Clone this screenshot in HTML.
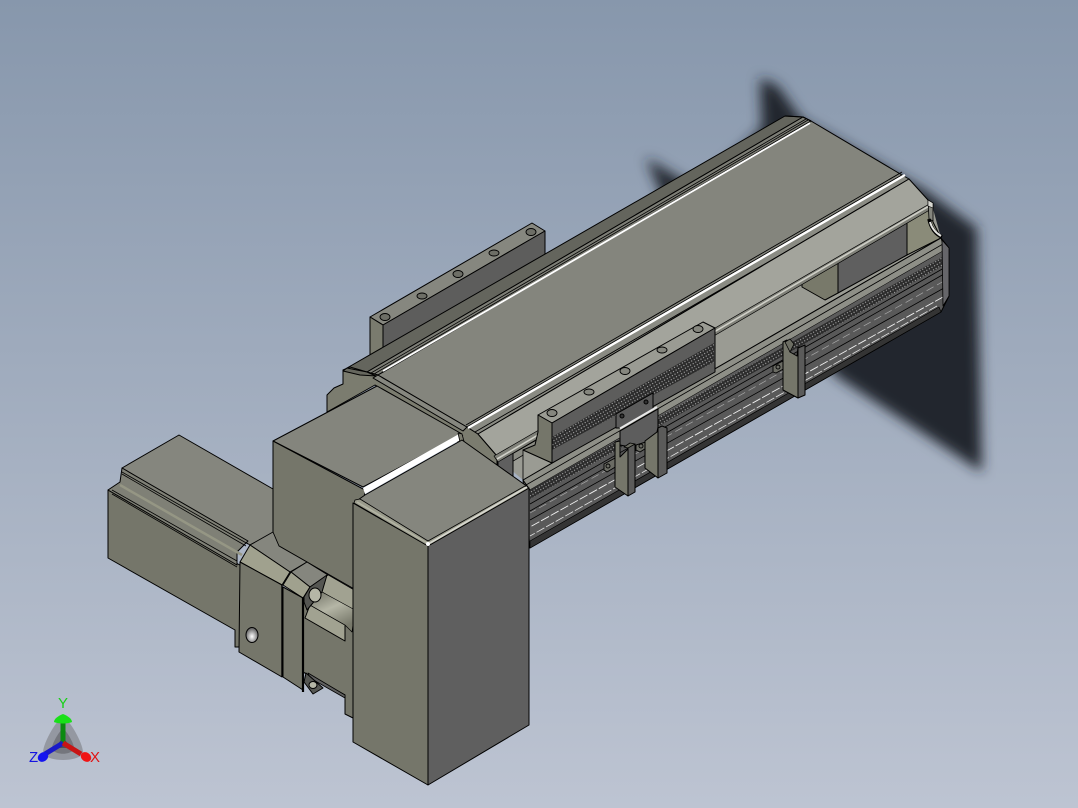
<!DOCTYPE html>
<html><head><meta charset="utf-8">
<style>
html,body{margin:0;padding:0;width:1078px;height:808px;overflow:hidden;background:linear-gradient(#8797ac,#bdc4d2)}
svg{position:absolute;left:0;top:0}
text{font-family:"Liberation Sans",sans-serif;font-size:15px}
</style></head><body>
<svg width="1078" height="808" viewBox="0 0 1078 808">
<defs>
<filter id="b" x="-20%" y="-20%" width="140%" height="140%"><feGaussianBlur stdDeviation="6.5"/></filter>
<pattern id="perf" width="3" height="3" patternUnits="userSpaceOnUse" patternTransform="rotate(-30)"><rect width="3" height="3" fill="#2c2c2c"/><circle cx="1.5" cy="1.5" r=".6" fill="#b0b0b0"/></pattern>
<radialGradient id="hole" cx=".5" cy=".6" r=".6"><stop offset="0" stop-color="#fff"/><stop offset="1" stop-color="#555"/></radialGradient>
<linearGradient id="cyl" x1="0" y1="0" x2=".5" y2="1"><stop offset="0" stop-color="#6f7064"/><stop offset=".5" stop-color="#b5b6a6"/><stop offset="1" stop-color="#77786a"/></linearGradient>
</defs>

<!-- shadow -->
<polygon filter="url(#b)" fill="#23272d" points="760,78 778,86 802,120 925,190 977,228 982,472 836,376 700,215 668,210 646,158 700,190 762,128"/>

<g stroke="#000" stroke-width="1" stroke-linejoin="round">
<!-- back plate -->
<polygon fill="#86877f" points="370,317 532,223 545,231 383,325"/>
<polygon fill="#5d5d5c" points="383,325 545,231 545,260 383,352"/>
<polygon fill="#7a7b6e" points="370,317 383,325 383,350 370,358"/>
<g fill="#6d6e66" stroke-width=".9">
<ellipse cx="385" cy="317" rx="5" ry="3.5"/><ellipse cx="422" cy="296" rx="5" ry="3"/><ellipse cx="458" cy="274" rx="5" ry="3.5"/><ellipse cx="494" cy="253" rx="5" ry="3"/><ellipse cx="531" cy="232" rx="5" ry="3.5"/>
</g>

<!-- beam upper dark band -->
<polygon fill="#64655d" points="785,116 803,117 367,372 347,368"/>
<polygon fill="#7d7e76" points="803,117 811,121 378,375 367,372"/>
<path d="M806,119 371,373M808,120 374,374" stroke-width=".8" fill="none"/>
<path d="M785,116 803,117 811,121" fill="none"/>
<!-- end piece -->
<polygon fill="#7b7c6f" points="343,370 350,367 367,372 378,375 467,427 478,434 497,456 497,472 463,445 375,385 327,412 327,395 334,388 343,384"/>
<polygon fill="#86877f" points="378,375 467,427 463,431 373,378"/>
<polygon fill="#66675e" points="347,368 367,372 376,376 360,375 343,371"/>
<path d="M375,385 463,436M497,458 497,472" fill="none"/>

<!-- top face -->
<polygon fill="#84857d" points="811,121 902,175 467,427 378,375"/>
<line x1="810" y1="123" x2="383" y2="371" stroke="#fff" stroke-width="1.8"/>
<!-- right rail strip -->
<polygon fill="#8a8b83" points="902,175 909,179 478,434 467,427"/>
<line x1="905" y1="175" x2="468" y2="428" stroke="#fff" stroke-width="2.4"/>
<path d="M902,172 466,425M908,181 475,432" fill="none" stroke-width=".9"/>
<!-- floor / opening -->
<polygon fill="#9a9b93" stroke="none" points="932,205 941,238 523,480 497,458"/>
<polygon fill="#5f5f5f" points="838,260 907,221 907,255 838,293"/>
<polygon fill="#8a8b79" points="907,221 930,207 933,222 941,238 907,255"/>
<polygon fill="#78796a" points="838,260 838,293 825,300 802,287 802,283"/>
<!-- inner ledge + post near -->
<polygon fill="#8a8b83" stroke-width=".8" points="498,462 540,438 540,445 505,466"/>
<polygon fill="#5f5f5f" points="498,457 513,450 513,477 498,486"/>
<!-- light band -->
<polygon fill="#a3a49c" points="909,179 928,200 932,205 497,456 478,434"/>
<polygon fill="#7f8078" stroke-width=".7" points="931,203 933,208 498,462 494,456"/>
<line x1="930" y1="205.5" x2="497" y2="459" stroke="#cfcfc7" stroke-width="1.6"/>
<path d="M928,200 933,203 933,221 929,219Z" fill="#85867e" stroke-width=".8"/>
<path d="M928,200 933,203 933,208 928,206Z" fill="#d8d8d2" stroke-width=".6"/>
<path d="M929,219C931,228 935,234 942,237" fill="none" stroke="#000" stroke-width="3.6"/>
<path d="M930,222C932,229 936,233 941,236" fill="none" stroke="#e4e4e0" stroke-width="2"/>

<!-- side profile -->
<polygon fill="#595959" points="941,238 949,248 949,296 941,312 530,548 523,480"/>
<polygon fill="#8e8f87" points="941,238 945,250 530,490 523,480"/>
<path d="M943,244 526,485" fill="none" stroke-width=".8"/>
<polygon fill="#5c5c5c" stroke="none" points="945,250 945,258 530,492 530,490"/>
<polygon fill="url(#perf)" stroke="none" points="944,256 944,265 530,499 530,490"/>
<path d="M944,268 530,504M944,274 530,511" fill="none" stroke-width=".8"/>
<line x1="944" y1="281" x2="530" y2="513" stroke="#a8a8a8" stroke-width=".7" stroke-dasharray="8 4"/>
<line x1="943" y1="297" x2="530" y2="527" stroke="#f0f0f0" stroke-width=".9" stroke-dasharray="9 2"/>
<line x1="937" y1="306" x2="530" y2="536" stroke="#e4e4e4" stroke-width=".8" stroke-dasharray="9 2"/>
<path d="M944,288 530,520" fill="none" stroke-width=".8"/>
<polygon fill="#343434" stroke-width=".7" points="939,307 941,312 530,548 530,541"/>
<polygon fill="#66666a" stroke-width=".8" points="942,240 949,248 949,296 943,306"/>

<!-- small tabs -->
<g fill="#6b6c64" stroke-width=".9">
<polygon points="604,464 617,457 617,466 607,472 604,470"/>
<polygon points="636,444 648,438 648,447 640,452 636,450"/>
<polygon points="773,366 787,359 787,367 776,373 773,372"/>
<circle cx="608" cy="466" r="2"/><circle cx="641" cy="446" r="2"/><circle cx="778" cy="367" r="2"/>
</g>

<!-- far clip -->
<polygon fill="#75766a" points="783,342 787,340 790,352 797,356 798,347 798,398 783,390"/>
<polygon fill="#5b5b5a" points="798,348 805,345 805,395 798,398"/>
<polygon fill="#6c6d63" stroke-width=".8" points="785,342 790,339 794,344 790,352"/>

<!-- block on band -->
<polygon fill="#9a9b93" points="538,415 703,322 715,328 552,423"/>
<polygon fill="#5d5d5c" points="552,423 715,328 715,372 552,463"/>
<polygon fill="url(#perf)" stroke="none" points="552,437 714,343 714,362 552,450"/>
<polygon fill="#9a9b93" stroke-width=".8" points="523,450 552,463 523,480"/>
<polygon fill="#75766a" points="538,415 552,423 552,463 523,450 535,445 538,432"/>
<g fill="#85867e" stroke-width=".9">
<ellipse cx="552" cy="413" rx="5" ry="3.5"/><ellipse cx="589" cy="392" rx="5" ry="3"/><ellipse cx="625" cy="371" rx="5" ry="3.5"/><ellipse cx="662" cy="350" rx="5" ry="3"/><ellipse cx="698" cy="329" rx="5" ry="3.5"/>
</g>

<!-- plate -->
<polygon fill="#5b5b5b" points="616,414 653,393 653,409 620,428 616,428"/>
<polygon fill="#5d5d5d" points="620,431 658,409 658,431 652,440 630,447 620,445"/>
<line x1="620" y1="428.5" x2="657" y2="407" stroke="#e8e8e8" stroke-width="2"/>
<circle cx="622" cy="416" r="2" fill="#333"/><circle cx="646" cy="402" r="2" fill="#333"/>

<!-- clip B -->
<polygon fill="#75766a" points="645,441 657,432 658,427 658,478 645,468"/>
<polygon fill="#5b5b5a" points="658,428 662,426 667,428 667,473 658,478"/>
<!-- clip A -->
<polygon fill="#75766a" points="615,442 620,441 620,457 627,450 628,447 628,496 615,487"/>
<polygon fill="#5b5b5a" points="628,447 635,444 635,492 628,496"/>
<polygon fill="#6c6d63" stroke-width=".8" points="624,447 630,443 635,444 628,448"/>

<!-- left motor -->
<polygon fill="#85867e" points="122,468 179,435 273,489 273,533 250,545"/>
<polygon fill="#75766a" points="108,490 245,568 245,647 235,647 235,630 108,558"/>
<polygon fill="#7f8076" points="122,468 248,541 237,552 237,565 108,490 120,482"/>
<line x1="120" y1="485" x2="242" y2="555" stroke="#959684" stroke-width="2.5"/>
<path d="M122,472 248,544M122,474 246,546M112,494 237,567M112,490 237,561" fill="none" stroke-width=".8"/>

<!-- shaft area -->
<polygon fill="#75766a" points="303,600 353,630 353,718 345,714 345,695 303,672"/>
<polygon fill="#a1a291" points="305,618 345,641 345,625 310,605"/>
<polygon fill="#a1a291" stroke-width=".8" points="325,573 356,591 356,612 322,592"/>
<polygon fill="url(#cyl)" stroke-width=".7" points="322,592 355,610 352,632 345,625 310,605"/>
<polygon fill="#5f5f5f" stroke-width=".8" points="308,673 345,695 345,698 310,678"/>

<!-- upper box -->
<polygon fill="#84857d" points="273,441 377,386 462,434 363,487"/>
<path d="M273,441 V535 Q274,542 279,546 L307,562 356,590 365,490Z" fill="#75766a"/>
<polygon fill="#fff" stroke="none" points="363,488 459,434 462,439 365,494"/>
<polygon fill="#7b7c6f" stroke-width=".8" points="462,434 465,445 460,442 458,433"/>

<!-- bracket piece 1 -->
<polygon fill="#85867e" stroke-width=".9" points="250,545 273,532 279,546 307,562 290,572"/>
<polygon fill="#a0a18e" points="240,562 250,545 290,572 282,585"/>
<polygon fill="#75766a" points="240,562 282,585 282,677 239,652"/>
<ellipse cx="252" cy="635" rx="6" ry="7.5" fill="url(#hole)"/>
<!-- bracket piece 2 -->
<polygon fill="#85867e" stroke-width=".9" points="291,572 307,562 328,575 310,587"/>
<polygon fill="#a0a18e" points="283,585 291,572 310,587 303,598"/>
<polygon fill="#75766a" stroke-width="1" points="283,587 303,598 303,690 283,677"/>
<path d="M303,598V692" stroke-width="2.2" fill="none"/>
<path d="M282,585V677" stroke-width="1.4" fill="none"/>
<polygon fill="#555652" points="304,597 310,587 327,575 322,592 307,610 304,602"/>
<ellipse cx="315" cy="595" rx="6" ry="7" fill="#b5b6a6"/>
<polygon fill="#555652" points="306,673 304,682 313,694 323,688"/>
<ellipse cx="313" cy="685" rx="4" ry="3.5" fill="#b5b6a6"/>

<!-- front box -->
<polygon fill="#85867e" points="355,502 365,495 462,440 528,487 428,545"/>
<polygon fill="#75766a" points="353,503 428,546 428,785 353,742"/>
<polygon fill="#5f5f5f" points="428,546 529,488 529,725 428,785"/>
<path d="M354,503 355,500 360,499 428,541 525,486 529,488 428,546Z" fill="#9a9b8c" stroke-width=".8"/>
<line x1="430" y1="543" x2="527" y2="487" stroke="#d6d6ce" stroke-width="1.8"/>
<line x1="357" y1="502" x2="427" y2="543" stroke="#b3b4a4" stroke-width="1.5"/>
<circle cx="428" cy="544" r="2" fill="#fff" stroke="none"/>
</g>

<!-- triad -->
<path d="M63,716C55,722 42,745 43,754C50,762 76,762 83,754C84,745 71,722 63,716Z" fill="#8d9199" opacity=".85"/>
<path d="M63,728C58,733 51,745 52,750C58,755 68,755 74,750C75,745 68,733 63,728Z" fill="#6b6e74" opacity=".8"/>
<path d="M63,737 55,748 71,748Z" fill="#3e3f44" opacity=".7"/>
<path d="M63,743V722" stroke="#0c8a10" stroke-width="5"/>
<path d="M63,714C68,716 72,719 72,722C68,724 58,724 54,722C54,719 58,716 63,714Z" fill="#19e019"/>
<path d="M63,743 45,754" stroke="#1a1ac8" stroke-width="5"/>
<ellipse cx="43" cy="757" rx="5.5" ry="4.5" fill="#1414f0" transform="rotate(-35 43 757)"/>
<path d="M63,743 81,754" stroke="#c81414" stroke-width="5"/>
<ellipse cx="86" cy="757" rx="5.5" ry="4.5" fill="#f01414" transform="rotate(35 86 757)"/>
<text x="58" y="708" fill="#18d018">Y</text>
<text x="29" y="762" fill="#1414e0">Z</text>
<text x="90" y="762" fill="#e01414">X</text>
</svg>
</body></html>
